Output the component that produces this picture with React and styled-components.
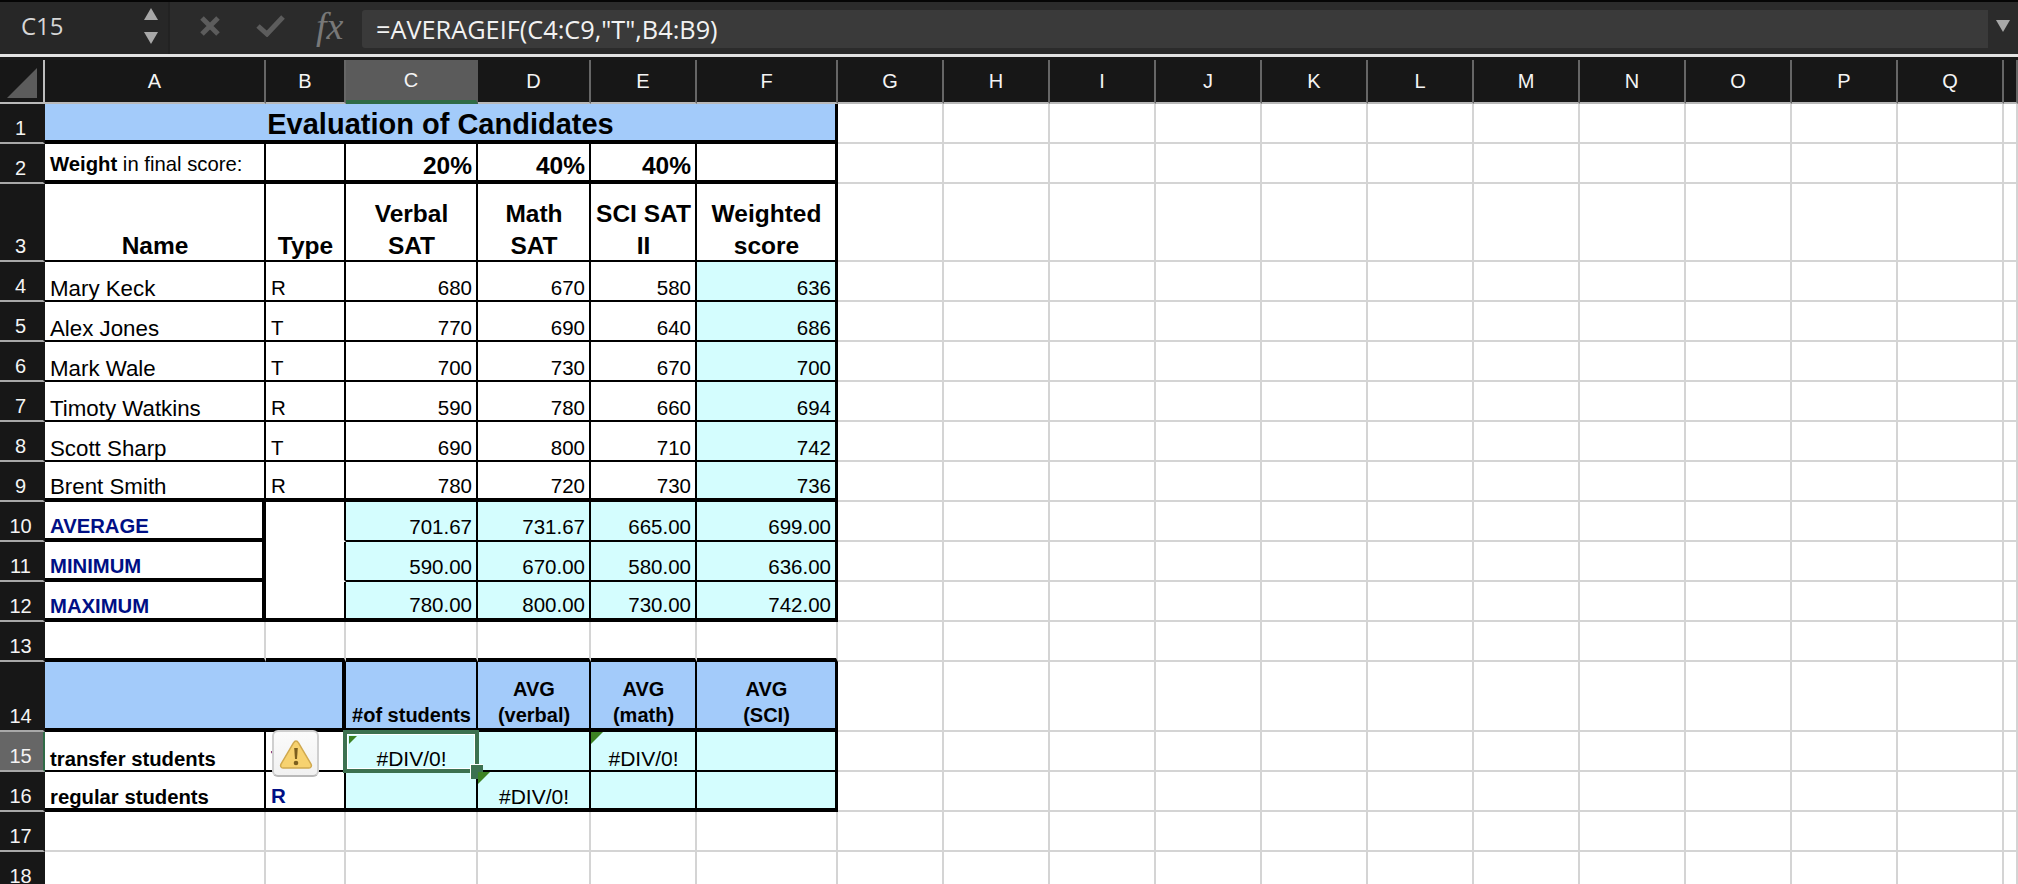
import React from 'react';
import styled, { createGlobalStyle } from 'styled-components';

const GlobalStyle = createGlobalStyle`
  html, body {
    margin: 0;
    padding: 0;
    background: #fff;
    overflow: hidden;
  }
`;

const Page = styled.div`
  width: 2018px;
  height: 884px;
  overflow: hidden;
  display: flex;
  flex-direction: column;
  font-family: "Liberation Sans", Arial, sans-serif;
`;

const Toolbar = styled.div`
  height: 60px;
  flex: none;
  box-sizing: border-box;
  display: flex;
  background: #2b2b2b;
  border-top: 2px solid #050505;
  border-bottom: 3px solid #1b1b1b;
  box-shadow: inset 0 -3px 0 #e4e4e4;
  padding-bottom: 3px;
`;

const NameBox = styled.div`
  width: 170px;
  flex: none;
  box-sizing: border-box;
  display: flex;
  align-items: center;
  justify-content: space-between;
  padding: 0 10px 5px 21px;
  background: #272727;
  border-right: 2px solid #222;
  color: #d6d6d6;
  font-family: "Open Sans", sans-serif;
  font-size: 24px;
`;

const Stepper = styled.div`
  display: flex;
  flex-direction: column;
  gap: 12px;
`;

const FormulaIcons = styled.div`
  width: 192px;
  flex: none;
  box-sizing: border-box;
  display: flex;
  align-items: center;
  padding: 0 0 5px 29px;
`;

const FxLabel = styled.span`
  margin-left: 31px;
  color: #787878;
  font-family: "Liberation Serif", serif;
  font-style: italic;
  font-size: 38px;
  line-height: 38px;
`;

const FormulaBox = styled.div`
  flex: 1;
  margin: 8px 0 6px;
  box-sizing: border-box;
  display: flex;
  align-items: center;
  padding-left: 14px;
  border-radius: 3px 0 0 3px;
  background: #3a3a3a;
  color: #f2f2f2;
  font-family: "Open Sans", sans-serif;
  font-size: 25.3px;
`;

const Expand = styled.div`
  width: 30px;
  flex: none;
  display: flex;
  align-items: center;
  justify-content: center;
  padding-bottom: 5px;
`;

const Sheet = styled.div`
  display: grid;
  grid-template-columns: 45px 221px 80px 132px 113px 106px 141px repeat(11, 106px) 14px;
  grid-template-rows: 44px 40px 40px 78px repeat(9, 40px) 40px 70px 40px 40px 40px 40px;
`;

const ColHead = styled.div`
  box-sizing: border-box;
  display: flex;
  align-items: center;
  justify-content: center;
  background: ${p => (p.$active ? '#5b5b5b' : '#171717')};
  border-right: 2px solid ${p => (p.$active ? '#5b5b5b' : '#666')};
  border-bottom: ${p => (p.$active ? '4px solid #2f6b46' : '2px solid #b9b9b9')};
  color: #f4f4f4;
  font-size: 20px;
`;

const Corner = styled.div`
  box-sizing: border-box;
  display: flex;
  align-items: flex-end;
  justify-content: center;
  padding-bottom: 4px;
  background: #171717;
  border-right: 2px solid #bdbdbd;
  border-bottom: 2px solid #b9b9b9;
`;

const RowHead = styled.div`
  box-sizing: border-box;
  display: flex;
  align-items: flex-end;
  justify-content: center;
  padding: 0 2px 1px 0;
  background: ${p => (p.$active ? '#666' : '#171717')};
  border-bottom: 2px solid #a8a8a8;
  border-right: 2px solid ${p => (p.$active ? '#2f6b46' : '#171717')};
  color: #f4f4f4;
  font-size: 20px;
  line-height: 26px;
`;

const Cell = styled.div`
  position: relative;
  box-sizing: border-box;
  min-width: 0;
  grid-column: span ${p => p.$span || 1};
  display: flex;
  align-items: flex-end;
  justify-content: ${p => p.$align || 'flex-start'};
  text-align: ${p => (p.$align === 'center' ? 'center' : 'left')};
  padding: 0 4px ${p => p.$pad || 0}px 5px;
  background: ${p => p.$fill || '#fff'};
  border-right: ${p => p.$right || '2px solid #d4d4d4'};
  border-bottom: ${p => p.$bottom || '2px solid #d4d4d4'};
  color: ${p => p.$color || '#000'};
  font-size: ${p => p.$size || 20.5}px;
  font-weight: ${p => (p.$bold ? 700 : 400)};
  line-height: ${p => p.$lh || 24}px;
  white-space: pre-line;
`;

// heading text sits a little below the line box in the sheet
const Lines = styled.span`
  margin-bottom: ${p => -p.$drop}px;
`;

const Mark = styled.span`
  position: absolute;
  left: ${p => p.$left}px;
  top: ${p => p.$top}px;
  width: 0;
  height: 0;
  border-top: ${p => p.$size}px solid #3c8224;
  border-right: ${p => p.$size}px solid transparent;
  z-index: 4;
`;

const Selection = styled.div`
  position: absolute;
  left: -3px;
  top: -2px;
  right: -3px;
  bottom: -3px;
  border: 4px solid #3c7150;
  box-shadow: inset 0 0 0 1px #fff;
  z-index: 3;
`;

const Handle = styled.div`
  position: absolute;
  right: -8px;
  bottom: -10px;
  width: 12px;
  height: 14px;
  background: #3c7150;
  border: 1px solid #fff;
  border-right: none;
  border-bottom: none;
`;

const WarningButton = styled.div`
  position: absolute;
  left: 6px;
  top: -2px;
  width: 47px;
  height: 47px;
  box-sizing: border-box;
  display: flex;
  align-items: center;
  justify-content: center;
  background: linear-gradient(#fbfbfb, #f1f1f1);
  border: 2px solid #cfcfcf;
  border-bottom-color: #b9b9b9;
  border-radius: 6px;
  z-index: 5;
`;

const THICK = '4px solid #000';
const THIN = '2px solid #000';
const EDGE = '3px solid #000';
const BLANK = '2px solid #fff';
const BLUE = '#a3cbfa';
const CYAN = '#d4fdfe';
const NAVY = '#000f85';

const columns = ['A', 'B', 'C', 'D', 'E', 'F', 'G', 'H', 'I', 'J', 'K', 'L', 'M', 'N', 'O', 'P', 'Q', ''];
const emptyColumns = 12;

const nameHeads = ['Name', 'Type', 'Verbal\nSAT', 'Math\nSAT', 'SCI SAT\nII', 'Weighted\nscore'];
const avgHeads = ['#of students', 'AVG\n(verbal)', 'AVG\n(math)', 'AVG\n(SCI)'];

const people = [
  ['Mary Keck', 'R', 680, 670, 580, 636],
  ['Alex Jones', 'T', 770, 690, 640, 686],
  ['Mark Wale', 'T', 700, 730, 670, 700],
  ['Timoty Watkins', 'R', 590, 780, 660, 694],
  ['Scott Sharp', 'T', 690, 800, 710, 742],
  ['Brent Smith', 'R', 780, 720, 730, 736],
];

const stats = [
  ['AVERAGE', '701.67', '731.67', '665.00', '699.00'],
  ['MINIMUM', '590.00', '670.00', '580.00', '636.00'],
  ['MAXIMUM', '780.00', '800.00', '730.00', '742.00'],
];

const Triangle = ({ up, color, w = 14, h = 12 }) => (
  <svg width={w} height={h} viewBox="0 0 14 12">
    <path d={up ? 'M7 0 L14 12 L0 12 Z' : 'M0 0 L14 0 L7 12 Z'} fill={color} />
  </svg>
);

const CrossIcon = () => (
  <svg width="22" height="22" viewBox="0 0 22 22">
    <path d="M3 3 L19 19 M19 3 L3 19" stroke="#5c5c5c" strokeWidth="5" fill="none" />
  </svg>
);

const CheckIcon = () => (
  <svg width="29" height="22" viewBox="0 0 29 22" style={{ marginLeft: 35 }}>
    <path d="M2 11 L11 19 L27 2" stroke="#5c5c5c" strokeWidth="5" fill="none" />
  </svg>
);

const WarningIcon = () => (
  <svg width="34" height="30" viewBox="0 0 34 30">
    <path
      d="M17 2 C18 2 19 3 19.5 4 L32 25 C33 27 32 29 30 29 L4 29 C2 29 1 27 2 25 L14.5 4 C15 3 16 2 17 2 Z"
      fill="#f7d270"
      stroke="#d0a94f"
      strokeWidth="1.5"
    />
    <path d="M15.2 9 L18.8 9 L18 20 L16 20 Z" fill="#7c5f1e" />
    <circle cx="17" cy="24" r="2.3" fill="#7c5f1e" />
  </svg>
);

// grey cells to the right of the table, or the whole row when there is no table part
const blanks = (key, n = emptyColumns) =>
  Array.from({ length: n }, (_, i) => <Cell key={`${key}-${i}`} />);

function App() {
  return (
    <Page>
      <GlobalStyle />
      <Toolbar>
        <NameBox>
          C15
          <Stepper>
            <Triangle up color="#a8a8a8" />
            <Triangle color="#a8a8a8" />
          </Stepper>
        </NameBox>
        <FormulaIcons>
          <CrossIcon />
          <CheckIcon />
          <FxLabel>fx</FxLabel>
        </FormulaIcons>
        <FormulaBox>=AVERAGEIF(C4:C9,"T",B4:B9)</FormulaBox>
        <Expand>
          <Triangle color="#a8a8a8" />
        </Expand>
      </Toolbar>

      <Sheet>
        <Corner>
          <svg width="30" height="30" viewBox="0 0 30 30">
            <path d="M30 0 L30 30 L0 30 Z" fill="#5c5c5c" />
          </svg>
        </Corner>
        {columns.map(c => (
          <ColHead key={c} $active={c === 'C'}>{c}</ColHead>
        ))}

        <RowHead>1</RowHead>
        <Cell $span={6} $fill={BLUE} $align="center" $bold $size={29} $lh={32} $right={EDGE} $bottom={THICK}>
          Evaluation of Candidates
        </Cell>
        {blanks('r1')}

        <RowHead>2</RowHead>
        <Cell $size={20.3} $pad={4} $right={THIN} $bottom={THICK}>
          <span><b>Weight</b> in final score:</span>
        </Cell>
        <Cell $right={THIN} $bottom={THICK} />
        {['20%', '40%', '40%'].map((v, i) => (
          <Cell key={i} $align="flex-end" $bold $size={24.5} $pad={2} $right={THIN} $bottom={THICK}>{v}</Cell>
        ))}
        <Cell $right={EDGE} $bottom={THICK} />
        {blanks('r2')}

        <RowHead>3</RowHead>
        {nameHeads.map((h, i) => (
          <Cell key={h} $align="center" $bold $size={24.5} $lh={32} $right={i === 5 ? EDGE : THIN} $bottom={THIN}>
            <Lines $drop={2}>{h}</Lines>
          </Cell>
        ))}
        {blanks('r3')}

        {people.map((p, i) => {
          const bottom = i === people.length - 1 ? THICK : THIN;
          return (
            <React.Fragment key={p[0]}>
              <RowHead>{i + 4}</RowHead>
              <Cell $size={22.3} $right={THIN} $bottom={bottom}>
                <Lines $drop={1}>{p[0]}</Lines>
              </Cell>
              <Cell $right={THIN} $bottom={bottom}>{p[1]}</Cell>
              <Cell $align="flex-end" $right={THIN} $bottom={bottom}>{p[2]}</Cell>
              <Cell $align="flex-end" $right={THIN} $bottom={bottom}>{p[3]}</Cell>
              <Cell $align="flex-end" $right={THIN} $bottom={bottom}>{p[4]}</Cell>
              <Cell $align="flex-end" $fill={CYAN} $right={EDGE} $bottom={bottom}>{p[5]}</Cell>
              {blanks(p[0])}
            </React.Fragment>
          );
        })}

        {stats.map((s, i) => (
          <React.Fragment key={s[0]}>
            <RowHead>{i + 10}</RowHead>
            <Cell $bold $color={NAVY} $size={20.3} $right={THICK} $bottom={THICK}>{s[0]}</Cell>
            <Cell $right={THIN} $bottom={i === 2 ? THICK : BLANK} />
            {s.slice(1).map((v, j) => (
              <Cell
                key={j}
                $align="flex-end"
                $fill={CYAN}
                $pad={1}
                $right={j === 3 ? EDGE : THIN}
                $bottom={i === 2 ? THICK : THIN}
              >
                {v}
              </Cell>
            ))}
            {blanks(s[0])}
          </React.Fragment>
        ))}

        <RowHead>13</RowHead>
        {Array.from({ length: 6 }, (_, i) => <Cell key={i} $bottom={THICK} />)}
        {blanks('r13')}

        <RowHead>14</RowHead>
        <Cell $span={2} $fill={BLUE} $right={THICK} $bottom={THICK} />
        {avgHeads.map((h, i) => (
          <Cell key={h} $fill={BLUE} $align="center" $bold $size={20} $lh={26} $right={i === 3 ? EDGE : THIN} $bottom={THICK}>
            {h}
          </Cell>
        ))}
        {blanks('r14')}

        <RowHead $active>15</RowHead>
        <Cell $bold $size={20.3} $right={THIN} $bottom={THIN}>
          <Lines $drop={1}>transfer students</Lines>
        </Cell>
        <Cell $bold $color={NAVY} $right={THIN} $bottom={THIN}>
          T
          <WarningButton><WarningIcon /></WarningButton>
        </Cell>
        <Cell $fill={CYAN} $align="center" $size={21} $right={THIN} $bottom={THIN}>
          <Lines $drop={1}>#DIV/0!</Lines>
          <Selection><Handle /></Selection>
          <Mark $left={3} $top={4} $size={8} />
        </Cell>
        <Cell $fill={CYAN} $right={THIN} $bottom={THIN} />
        <Cell $fill={CYAN} $align="center" $size={21} $right={THIN} $bottom={THIN}>
          <Mark $left={0} $top={0} $size={12} />
          <Lines $drop={1}>#DIV/0!</Lines>
        </Cell>
        <Cell $fill={CYAN} $right={EDGE} $bottom={THIN} />
        {blanks('r15')}

        <RowHead>16</RowHead>
        <Cell $bold $size={20.3} $right={THIN} $bottom={THICK}>
          <Lines $drop={1}>regular students</Lines>
        </Cell>
        <Cell $bold $color={NAVY} $right={THIN} $bottom={THICK}>R</Cell>
        <Cell $fill={CYAN} $right={THIN} $bottom={THICK} />
        <Cell $fill={CYAN} $align="center" $size={21} $right={THIN} $bottom={THICK}>
          <Mark $left={0} $top={0} $size={12} />
          <Lines $drop={1}>#DIV/0!</Lines>
        </Cell>
        <Cell $fill={CYAN} $right={THIN} $bottom={THICK} />
        <Cell $fill={CYAN} $right={EDGE} $bottom={THICK} />
        {blanks('r16')}

        <RowHead>17</RowHead>
        {blanks('r17', 18)}
        <RowHead>18</RowHead>
        {blanks('r18', 18)}
      </Sheet>
    </Page>
  );
}

export default App;
